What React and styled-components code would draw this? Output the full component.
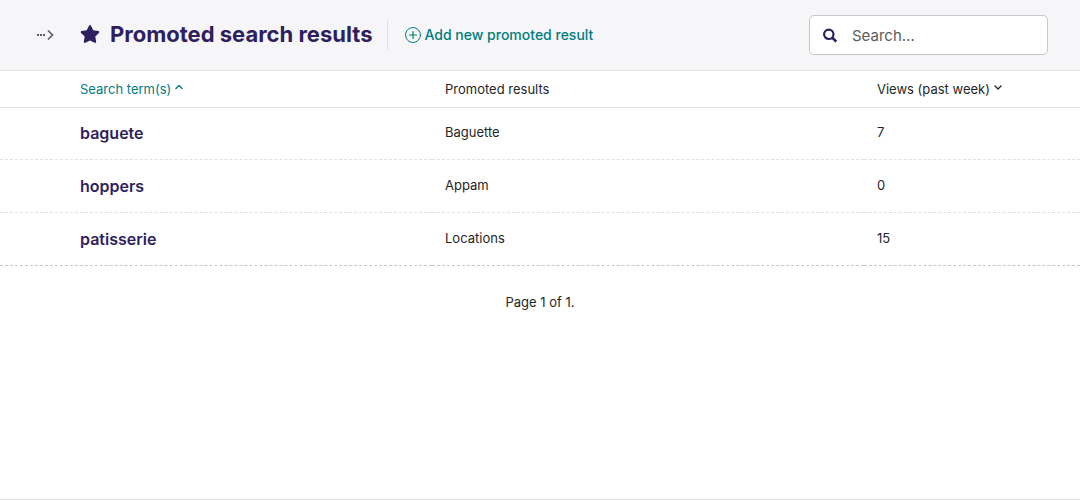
import React from 'react';
import styled, { createGlobalStyle } from 'styled-components';

const GlobalStyle = createGlobalStyle`
  *, *::before, *::after { box-sizing: border-box; }
  body {
    margin: 0;
    background: #fff;
    color: #262626;
    font-family: Inter, "Liberation Sans", sans-serif;
    font-size: 13px;
    line-height: 20px;
    -webkit-font-smoothing: antialiased;
  }
`;

const Page = styled.div`
  display: flex;
  flex-direction: column;
  min-height: 100vh;
  border-bottom: 1px solid #e0e0e0;
`;

const Header = styled.header`
  display: flex;
  align-items: center;
  justify-content: space-between;
  padding: 15px 32px;
  background: #f6f6f8;
  border-bottom: 1px solid #e0e0e0;
`;

const HeaderLeft = styled.div`
  display: flex;
  align-items: center;
`;

const ToggleButton = styled.button`
  display: flex;
  align-items: center;
  width: 48px;
  height: 30px;
  padding: 0 4px;
  border: 0;
  background: none;
  color: #5c5c5c;
`;

const Title = styled.h1`
  display: flex;
  align-items: center;
  gap: 10px;
  margin: 0;
  padding: 0 14px 2px 0;
  color: #2e1f5e;
  font-size: 22px;
  font-weight: 700;
  line-height: 28px;
`;

const AddLink = styled.a`
  display: flex;
  align-items: center;
  gap: 4px;
  height: 30px;
  padding-left: 17px;
  border-left: 1px solid #e0e0e0;
  color: #007d7e;
  font-size: 14px;
  font-weight: 500;
  text-decoration: none;
`;

const SearchForm = styled.form`
  display: flex;
  align-items: center;
  gap: 14px;
  width: 239px;
  height: 40px;
  padding: 0 12px;
  border: 1px solid #c8c8c8;
  border-radius: 5px;
  background: #fff;
  color: #2e1f5e;
`;

const SearchInput = styled.input`
  flex: 1;
  min-width: 0;
  padding: 2px 0 0;
  border: 0;
  outline: 0;
  background: none;
  color: #262626;
  font-family: inherit;
  font-size: 15px;
  line-height: 24px;
  &::placeholder { color: #5c5c5c; opacity: 1; }
`;

const Table = styled.table`
  width: 100%;
  table-layout: fixed;
  border-collapse: collapse;
`;

const HeadCell = styled.th`
  width: ${(p) => p.$width};
  height: 36px;
  padding: 0 13px;
  border-bottom: 1px solid #e0e0e0;
  font-weight: 400;
  text-align: left;
  &:first-child { padding-left: 80px; }
`;

const SortLink = styled.a`
  display: inline-flex;
  align-items: center;
  gap: 3px;
  color: ${(p) => (p.$active ? '#007d7e' : 'inherit')};
  text-decoration: none;
`;

const Cell = styled.td`
  height: 53px;
  padding: 0 13px 2px;
  border-bottom: inherit;
`;

const Row = styled.tr`
  border-bottom: 1px dashed #e0e0e0;
  &:first-child ${Cell} { height: 52px; }
  &:last-child { border-bottom-color: #c8c8c8; }
`;

const TermCell = styled(Cell)`
  padding: 1px 13px 0 80px;
`;

const TermLink = styled.a`
  color: #2e1f5e;
  font-size: 16px;
  font-weight: 600;
  text-decoration: none;
`;

const Pagination = styled.p`
  margin: 26px 0;
  text-align: center;
`;

const ExpandIcon = () => (
  <svg width="18" height="14" viewBox="0 0 18 14" fill="none" aria-hidden="true">
    <path d="M1 6h2v2H1zM4 6h2v2H4zM7 6h2v2H7z" fill="currentColor" />
    <path d="M12 2.500L16.500 7L12 11.500" stroke="currentColor" strokeWidth="1.600" />
  </svg>
);

const StarIcon = () => (
  <svg width="20" height="20" viewBox="0 0 576 512" fill="currentColor" aria-hidden="true">
    <path d="M259.300 17.800L194 150.200 47.900 171.500c-26.200 3.800-36.700 36.100-17.700 54.600l105.700 103-25 145.500c-4.500 26.300 23.200 46 46.400 33.700L288 439.600l130.700 68.700c23.200 12.200 50.900-7.400 46.400-33.700l-25-145.500 105.700-103c19-18.500 8.500-50.800-17.700-54.600L382 150.200 316.700 17.800c-11.700-23.600-45.600-23.900-57.400 0z" />
  </svg>
);

const PlusIcon = () => (
  <svg width="16" height="16" viewBox="0 0 16 16" fill="none" stroke="currentColor" strokeLinecap="round" aria-hidden="true">
    <circle cx="8" cy="8" r="7.500" />
    <path d="M8 4.500v7M4.500 8h7" strokeWidth="1.200" />
  </svg>
);

const SearchIcon = () => (
  <svg width="16" height="16" viewBox="0 0 16 16" fill="none" stroke="currentColor" aria-hidden="true">
    <circle cx="6.800" cy="7.300" r="4.700" strokeWidth="2.200" />
    <path d="M10.300 10.800L14.300 14.600" strokeWidth="2.600" />
  </svg>
);

const SortIcon = ({ up }) => (
  <svg width="10" height="14" viewBox="0 0 10 14" fill="none" stroke="currentColor" strokeWidth="1.400" strokeLinecap="round" strokeLinejoin="round" aria-hidden="true">
    <path d={up ? 'M2 6.500L5 3.500L8 6.500' : 'M2 4L5 7L8 4'} />
  </svg>
);

const promotions = [
  { term: 'baguete', result: 'Baguette', views: 7 },
  { term: 'hoppers', result: 'Appam', views: 0 },
  { term: 'patisserie', result: 'Locations', views: 15 },
];

export default function App() {
  return (
    <>
      <GlobalStyle />
      <Page>
        <Header>
          <HeaderLeft>
            <ToggleButton type="button" aria-label="Toggle breadcrumbs"><ExpandIcon /></ToggleButton>
            <Title><StarIcon />Promoted search results</Title>
            <AddLink href="#add"><PlusIcon />Add new promoted result</AddLink>
          </HeaderLeft>
          <SearchForm role="search">
            <SearchIcon />
            <SearchInput type="text" aria-label="Search" placeholder="Search…" />
          </SearchForm>
        </Header>
        <main>
          <Table>
            <thead>
              <tr>
                <HeadCell $width="40%"><SortLink href="#term" $active>Search term(s)<SortIcon up /></SortLink></HeadCell>
                <HeadCell $width="40%">Promoted results</HeadCell>
                <HeadCell $width="20%"><SortLink href="#views">Views (past week)<SortIcon /></SortLink></HeadCell>
              </tr>
            </thead>
            <tbody>
              {promotions.map((p) => (
                <Row key={p.term}>
                  <TermCell><TermLink href={`#${p.term}`}>{p.term}</TermLink></TermCell>
                  <Cell>{p.result}</Cell>
                  <Cell>{p.views}</Cell>
                </Row>
              ))}
            </tbody>
          </Table>
          <Pagination>Page 1 of 1.</Pagination>
        </main>
      </Page>
    </>
  );
}
